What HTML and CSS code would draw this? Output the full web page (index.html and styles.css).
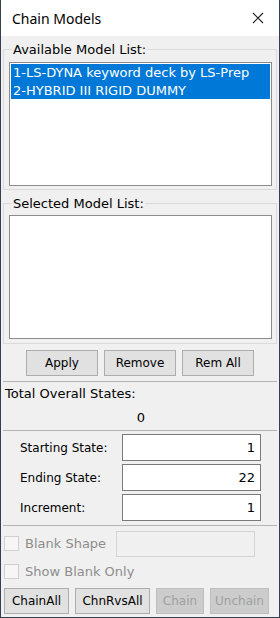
FILE: index.html
```html
<!DOCTYPE html>
<html lang="en">
<head>
    <meta charset="UTF-8">
    <title>Chain Models</title>
    <link rel="stylesheet" href="styles.css">
</head>
<body>
    <div class="window">
        <div class="titlebar">
            <span class="title">Chain Models</span>
            <svg class="close" width="12" height="12" viewBox="0 0 12 12">
                <path d="M1 1 L11 11 M11 1 L1 11" stroke="#222" stroke-width="1.1" fill="none"/>
            </svg>
        </div>
        <div class="content">
            <fieldset class="group">
                <legend>Available Model List:</legend>
                <div class="listbox">
                    <div class="item selected">1-LS-DYNA keyword deck by LS-Prep</div>
                    <div class="item selected">2-HYBRID III RIGID DUMMY</div>
                </div>
            </fieldset>
            <fieldset class="group second">
                <legend>Selected Model List:</legend>
                <div class="listbox"></div>
            </fieldset>
            <div class="button-row">
                <button class="btn">Apply</button>
                <button class="btn">Remove</button>
                <button class="btn">Rem All</button>
            </div>
            <div class="section totals">
                <div class="total-label">Total Overall States:</div>
                <div class="total-value">0</div>
            </div>
            <div class="section states">
                <div class="field">
                    <label>Starting State:</label>
                    <input type="text" value="1">
                </div>
                <div class="field">
                    <label>Ending State:</label>
                    <input type="text" value="22">
                </div>
                <div class="field">
                    <label>Increment:</label>
                    <input type="text" value="1">
                </div>
            </div>
            <div class="section blank">
                <div class="check-row first">
                    <span class="checkbox"></span>
                    <span class="check-label">Blank Shape</span>
                    <input type="text" class="blank-input" disabled>
                </div>
                <div class="check-row">
                    <span class="checkbox"></span>
                    <span class="check-label">Show Blank Only</span>
                </div>
            </div>
            <div class="bottom-row">
                <button class="btn chain-all">ChainAll</button>
                <button class="btn chain-rvs">ChnRvsAll</button>
                <button class="btn chain" disabled>Chain</button>
                <button class="btn unchain" disabled>Unchain</button>
            </div>
        </div>
    </div>
</body>
</html>
```

FILE: styles.css
```css
body {
    margin: 0;
    padding: 0;
    font-family: "DejaVu Sans", sans-serif;
    font-size: 13px;
    color: #000;
}
.window {
    width: 280px;
    height: 618px;
    box-sizing: border-box;
    border: 1px solid #34404f;
    border-top: none;
    background-color: #f0f0f0;
    display: flex;
    flex-direction: column;
}
.titlebar {
    height: 36px;
    background-color: #fff;
    display: flex;
    align-items: center;
    justify-content: space-between;
    padding: 0 15px 0 11px;
    flex-shrink: 0;
}
.title {
    font-family: "Noto Sans", sans-serif;
    font-size: 14px;
    color: #000;
}
.close {
    display: block;
}
.content {
    padding: 6px 2px 0 2px;
    display: flex;
    flex-direction: column;
}

/* group boxes */
.group {
    margin: 0;
    padding: 5px 4px 3px 5px;
    border: 1px solid #dadada;
    min-width: 0;
}
.group legend {
    padding: 0 1px;
    margin-left: 3px;
    line-height: 15px;
}
.group.second {
    margin-top: 6px;
    padding-top: 4px;
    padding-bottom: 4px;
}
.listbox {
    height: 124px;
    box-sizing: border-box;
    background-color: #fff;
    border: 1px solid #8c8c8c;
    padding: 1px;
}
.item {
    line-height: 17.5px;
    padding-left: 2px;
    color: #fff;
    white-space: nowrap;
    overflow: hidden;
}
.item.selected {
    background-color: #0078d7;
}

/* buttons */
.btn {
    font-family: "DejaVu Sans", sans-serif;
    font-size: 12px;
    color: #000;
    height: 26px;
    background-color: #e1e1e1;
    border: 1px solid #adadad;
    padding: 0;
}
.btn:disabled {
    color: #a0a0a0;
    background-color: #cccccc;
    border-color: #bfbfbf;
}
.button-row {
    display: flex;
    justify-content: center;
    gap: 6px;
    padding: 6px 0 5px 0;
    border-bottom: 1px solid #b4b4b4;
}
.button-row .btn {
    width: 72px;
}

/* totals */
.totals {
    padding: 4px 0 5px 2px;
    border-bottom: 1px solid #b4b4b4;
    line-height: 15px;
}
.total-value {
    text-align: center;
    margin-top: 9px;
}

/* state fields */
.states {
    padding: 3px 16px 4px 16px;
    border-bottom: 1px solid #b4b4b4;
    display: flex;
    flex-direction: column;
    gap: 3px;
}
.field {
    display: flex;
    align-items: center;
    justify-content: space-between;
}
.field label {
    font-size: 12px;
    padding-left: 1px;
}
.field input {
    width: 139px;
    height: 27px;
    box-sizing: border-box;
    border: 1px solid #7a7a7a;
    text-align: right;
    font-family: "DejaVu Sans", sans-serif;
    font-size: 13px;
    padding: 0 5px;
    color: #000;
    background-color: #fff;
}

/* blank options */
.blank {
    padding: 3px 0 0 1px;
}
.check-row {
    display: flex;
    align-items: center;
    height: 26px;
    color: #8d8d8d;
}
.check-row.first {
    height: 29px;
}
.checkbox {
    width: 13px;
    height: 13px;
    border: 1px solid #d0d0d0;
    background-color: #f6f6f6;
    margin-right: 6px;
}
.blank-input {
    margin-left: auto;
    margin-right: 22px;
    width: 139px;
    height: 26px;
    box-sizing: border-box;
    border: 1px solid #d4d4d4;
    background-color: #f0f0f0;
}

/* bottom buttons */
.bottom-row {
    display: flex;
    gap: 6px;
    padding: 4px 0 0 1px;
}
.chain-all { width: 65px; }
.chain-rvs { width: 75px; }
.chain { width: 48px; }
.unchain { width: 59px; }
```
